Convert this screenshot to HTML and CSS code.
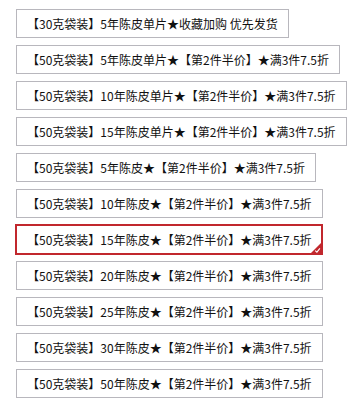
FILE: index.html
```html
<!DOCTYPE html>
<html lang="zh-CN">
<head>
<meta charset="utf-8">
<link rel="stylesheet" href="styles.css">
</head>
<body>
<ul class="sku-list">
  <li class="sku"><span class="sku-label">【30克袋装】5年陈皮单片★收藏加购 优先发货</span></li>
  <li class="sku"><span class="sku-label">【50克袋装】5年陈皮单片★【第2件半价】★满3件7.5折</span></li>
  <li class="sku"><span class="sku-label">【50克袋装】10年陈皮单片★【第2件半价】★满3件7.5折</span></li>
  <li class="sku"><span class="sku-label">【50克袋装】15年陈皮单片★【第2件半价】★满3件7.5折</span></li>
  <li class="sku"><span class="sku-label">【50克袋装】5年陈皮★【第2件半价】★满3件7.5折</span></li>
  <li class="sku"><span class="sku-label">【50克袋装】10年陈皮★【第2件半价】★满3件7.5折</span></li>
  <li class="sku is-selected"><span class="sku-label">【50克袋装】15年陈皮★【第2件半价】★满3件7.5折</span><svg class="tick" width="10" height="10" viewBox="0 0 10 10"><path d="M10 0 L10 10 L0 10 Z" fill="#c1272d"/><path d="M4.2 7.6 L5.9 9.1 L8.9 5.4" fill="none" stroke="#fff" stroke-width="1.1"/></svg></li>
  <li class="sku"><span class="sku-label">【50克袋装】20年陈皮★【第2件半价】★满3件7.5折</span></li>
  <li class="sku"><span class="sku-label">【50克袋装】25年陈皮★【第2件半价】★满3件7.5折</span></li>
  <li class="sku"><span class="sku-label">【50克袋装】30年陈皮★【第2件半价】★满3件7.5折</span></li>
  <li class="sku"><span class="sku-label">【50克袋装】50年陈皮★【第2件半价】★满3件7.5折</span></li>
</ul>
</body>
</html>
```

FILE: styles.css
```css
html, body {
  margin: 0;
  padding: 0;
  background: #fff;
}

.sku-list {
  list-style: none;
  margin: 0;
  padding: 9px 0 0 16px;
  display: flex;
  flex-direction: column;
  align-items: flex-start;
  gap: 7px;
  font-family: "Noto Sans CJK SC", "Noto Sans", sans-serif;
  font-size: 12px;
  color: #111;
}

.sku {
  position: relative;
  box-sizing: border-box;
  height: 29px;
  line-height: 27px;
  padding: 0 10px;
  border: 1px solid #b8b7bd;
  white-space: nowrap;
}

.sku.is-selected {
  border: 2px solid #c1272d;
  margin: -1px;
  height: 31px;
  padding: 0 9px 0 10px;
  line-height: 27px;
}

.tick {
  position: absolute;
  right: 0;
  bottom: 0;
  display: block;
}
```
